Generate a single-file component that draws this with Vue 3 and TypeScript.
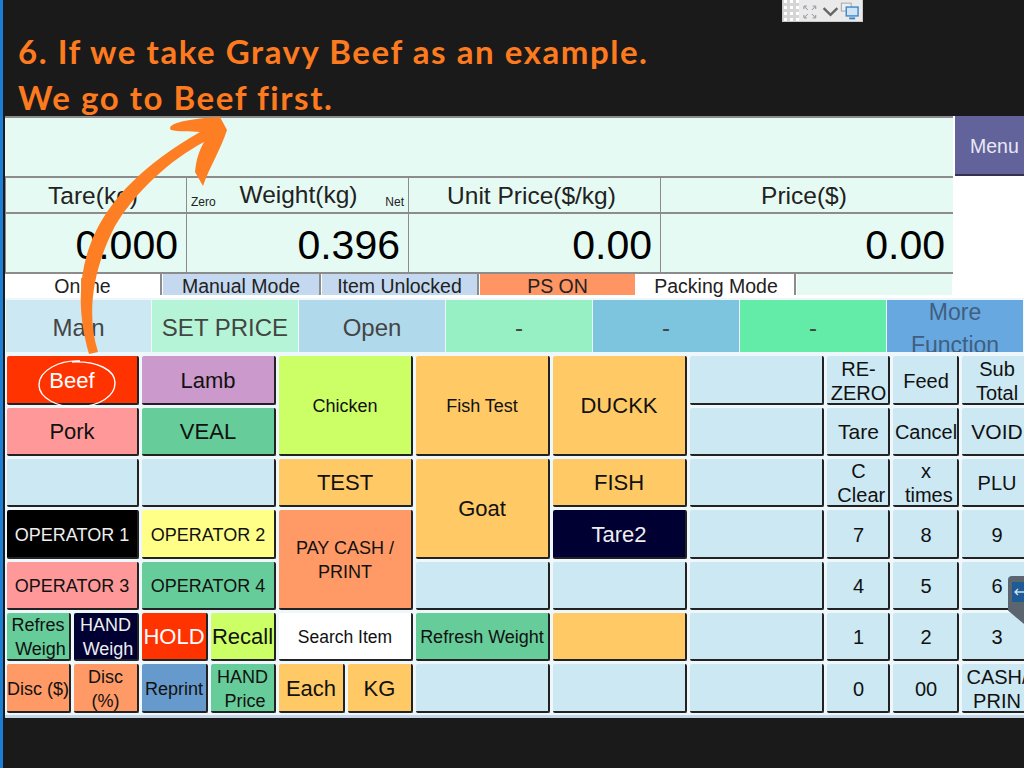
<template>
  <div class="page">
    <div class="headline">
      <div>6. If we take Gravy Beef as an example.</div>
      <div>We go to Beef first.</div>
    </div>

    <div class="screen">
      <div class="top">
        <div class="display">
          <div class="message"></div>
          <div class="readings heads">
            <div class="cell">Tare(kg)</div>
            <div class="cell weight-head">
              <small>Zero</small>
              <span>Weight(kg)</span>
              <small>Net</small>
            </div>
            <div class="cell">Unit Price($/kg)</div>
            <div class="cell">Price($)</div>
          </div>
          <div class="readings values">
            <div class="cell">0.000</div>
            <div class="cell">0.396</div>
            <div class="cell">0.00</div>
            <div class="cell">0.00</div>
          </div>
          <div class="status">
            <div
                v-for="s in statuses"
                :key="s.label + s.tone"
                class="status-item"
                :class="s.tone"
            >
              {{ s.label }}
            </div>
          </div>
        </div>
        <div class="side">
          <div class="menu-btn">Menu</div>
        </div>
      </div>

      <div class="tabs">
        <div
            v-for="(t, i) in tabs"
            :key="i"
            class="tab"
            :class="t.tone"
        >
          <span class="tab-label">{{ t.label }}</span>
        </div>
      </div>

      <div class="keys">
        <div
            v-for="(k, i) in keys"
            :key="i"
            class="key"
            :class="k.tone"
            :style="{ gridColumn: k.col, gridRow: k.row, fontSize: k.size + 'px' }"
        >
          {{ k.label }}
        </div>
      </div>
    </div>

    <!-- 橙色箭头 -->
    <svg class="overlay" width="1024" height="768" viewBox="0 0 1024 768">
      <path
          d="M89 354C77 312 77 270 96 231C112 199 142 165 200 132C190 131 178 132 171 130C167 126 176 122 190 120C202 118 212 117 220 117L227 130C221 149 209 168 203 186L195 172C196 160 199 151 204 142C170 160 135 192 115 226C95 265 85 310 98 352Z"
          fill="#fe7f23"
      />
      <path
          d="M80 361C60 360 39 370 39 385C39 398 58 408 78 407C100 406 115 396 115 383C115 370 98 361 72 362"
          fill="none"
          stroke="#fff"
          stroke-width="1.4"
      />
    </svg>

    <!-- 远程工具条 -->
    <div class="remote-bar">
      <div class="grip">
        <i v-for="n in 12" :key="n"></i>
      </div>
      <svg width="64" height="22" viewBox="0 0 64 22">
        <path
            d="M5 9V6h3M14 6h3v3M5 15v3h3M14 18h3v-3M6 7l3 3M16 7l-3 3M6 17l3-3M16 17l-3-3"
            fill="none"
            stroke="#8a8f94"
            stroke-width="1"
        />
        <path d="M25 8l7 7 7-7" fill="none" stroke="#666" stroke-width="2.4"/>
        <rect x="43" y="3" width="10" height="8" fill="#eee" stroke="#a5a5a5"/>
        <rect x="48" y="7" width="12" height="9" fill="#cfe4f7" stroke="#3d85c6" stroke-width="1.4"/>
        <path d="M51 18.5h6" stroke="#3d85c6" stroke-width="2"/>
      </svg>
    </div>

    <div class="side-handle">
      <svg width="12" height="20" viewBox="0 0 12 20">
        <rect width="12" height="20" fill="#1c5b95"/>
        <path d="M12 10H3M6 7l-3 3 3 3" fill="none" stroke="#cfe0ee" stroke-width="1.4"/>
      </svg>
    </div>
  </div>
</template>

<script setup lang="ts">
interface Key {
  label: string
  tone: string
  col: string
  row: string
  size: number
}

const statuses = [
  { label: 'Online', tone: 'white' },
  { label: 'Manual Mode', tone: 'pale' },
  { label: 'Item Unlocked', tone: 'pale' },
  { label: 'PS ON', tone: 'coral' },
  { label: 'Packing Mode', tone: 'white' },
  { label: '', tone: 'mint' }
]

const tabs = [
  { label: 'Main', tone: 'tab-a' },
  { label: 'SET PRICE', tone: 'tab-b' },
  { label: 'Open', tone: 'tab-c' },
  { label: '-', tone: 'tab-d' },
  { label: '-', tone: 'tab-e' },
  { label: '-', tone: 'tab-f' },
  { label: 'More\nFunction', tone: 'tab-g' }
]

const k = (label: string, tone: string, col: string, row: string, size = 22): Key => ({ label, tone, col, row, size })

const keys: Key[] = [
  k('Beef', 'red', '1 / 3', '1'),
  k('Lamb', 'purple', '3 / 5', '1'),
  k('Chicken', 'lime', '5 / 7', '1 / 3', 18),
  k('Fish Test', 'orange', '7', '1 / 3', 18),
  k('DUCKK', 'orange', '8', '1 / 3'),
  k('', 'blank', '9', '1'),
  k('RE-\nZERO', 'blank', '10', '1', 20),
  k('Feed', 'blank', '11', '1', 20),
  k('Sub\nTotal', 'blank', '12', '1', 20),

  k('Pork', 'pink', '1 / 3', '2'),
  k('VEAL', 'green', '3 / 5', '2'),
  k('', 'blank', '9', '2'),
  k('Tare', 'blank', '10', '2', 21),
  k('Cancel', 'blank', '11', '2', 20),
  k('VOID', 'blank', '12', '2', 21),

  k('', 'blank', '1 / 3', '3'),
  k('', 'blank', '3 / 5', '3'),
  k('TEST', 'orange', '5 / 7', '3'),
  k('Goat', 'orange', '7', '3 / 5'),
  k('FISH', 'orange', '8', '3'),
  k('', 'blank', '9', '3'),
  k('C\n\u00a0Clear', 'blank', '10', '3', 20),
  k('x\n\u00a0times', 'blank', '11', '3', 20),
  k('PLU', 'blank', '12', '3', 20),

  k('OPERATOR 1', 'black', '1 / 3', '4', 18),
  k('OPERATOR 2', 'yellow', '3 / 5', '4', 18),
  k('PAY CASH /\nPRINT', 'coral', '5 / 7', '4 / 6', 18),
  k('Tare2', 'navy', '8', '4'),
  k('', 'blank', '9', '4'),
  k('7', 'blank', '10', '4', 20),
  k('8', 'blank', '11', '4', 20),
  k('9', 'blank', '12', '4', 20),

  k('OPERATOR 3', 'pink', '1 / 3', '5', 18),
  k('OPERATOR 4', 'green', '3 / 5', '5', 18),
  k('', 'blank', '7', '5'),
  k('', 'blank', '8', '5'),
  k('', 'blank', '9', '5'),
  k('4', 'blank', '10', '5', 20),
  k('5', 'blank', '11', '5', 20),
  k('6', 'blank', '12', '5', 20),

  k('Refres\n\u00a0Weigh', 'green', '1', '6', 18),
  k('HAND\n\u00a0Weigh', 'navy', '2', '6', 18),
  k('HOLD', 'red', '3', '6'),
  k('Recall', 'lime', '4', '6'),
  k('Search Item', 'white', '5 / 7', '6', 17.5),
  k('Refresh Weight', 'green', '7', '6', 18),
  k('', 'orange', '8', '6'),
  k('', 'blank', '9', '6'),
  k('1', 'blank', '10', '6', 20),
  k('2', 'blank', '11', '6', 20),
  k('3', 'blank', '12', '6', 20),

  k('Disc ($)', 'coral', '1', '7', 18),
  k('Disc\n(%)', 'coral', '2', '7', 18),
  k('Reprint', 'blue', '3', '7', 18),
  k('HAND\n\u00a0Price', 'green', '4', '7', 18),
  k('Each', 'orange', '5', '7'),
  k('KG', 'orange', '6', '7'),
  k('', 'blank', '7', '7'),
  k('', 'blank', '8', '7'),
  k('', 'blank', '9', '7'),
  k('0', 'blank', '10', '7', 20),
  k('00', 'blank', '11', '7', 20),
  k('CASH/\nPRIN', 'blank', '12', '7', 20)
]
</script>

<style scoped>
.page {
  position: relative;
  width: 1024px;
  height: 768px;
  overflow: hidden;
  background: #1a1a1a;
  border-left: 3px solid #1c7fd6;
  box-sizing: border-box;
  font-family: "Liberation Sans", Arial, sans-serif;
  color: #111;
}

.headline {
  height: 116px;
  box-sizing: border-box;
  padding: 28px 0 0 15px;
  font-family: Lato, sans-serif;
  font-weight: 700;
  font-size: 33px;
  line-height: 46px;
  letter-spacing: 1.55px;
  color: #fe7a1f;
}

.screen {
  margin-left: 2px;
  height: 602px;
  background: #edf7fc;
  border-bottom: 3px solid #c5d5e6;
  box-sizing: border-box;
}

.top {
  display: flex;
  height: 182px;
}

.display {
  width: 948px;
  background: #e5faf2;
}

.message {
  height: 60px;
  border-top: 2px solid #8c8c8c;
  box-sizing: border-box;
}

.readings {
  display: grid;
  grid-template-columns: 181px 222px 252px 293px;
}

.cell {
  border-top: 2px solid #8c8c8c;
  border-left: 1px solid #8c8c8c;
  box-sizing: border-box;
}

.heads {
  height: 36px;
}

.heads .cell {
  display: flex;
  align-items: center;
  justify-content: center;
  padding: 2px 6px 0 0;
  font-size: 24.5px;
  color: #222;
}

.heads .weight-head {
  justify-content: space-between;
  padding: 0 4px;
}

.weight-head small {
  align-self: flex-end;
  padding-bottom: 3px;
  font-size: 12px;
}

.weight-head span {
  margin-right: 4px;
}

.values {
  height: 60px;
}

.values .cell {
  padding-right: 8px;
  font-size: 41px;
  line-height: 62px;
  text-align: right;
  color: #000;
}

.status {
  display: grid;
  grid-template-columns: 158px 159px 158px 158px 159px 156px;
  height: 26px;
  border-top: 2px solid #8c8c8c;
  box-sizing: border-box;
  background: #fff;
}

.status-item {
  height: 21px;
  line-height: 24px;
  text-align: center;
  font-size: 19.5px;
  color: #222;
  border-right: 2px solid #8c8c8c;
  margin-right: 1px;
}

.status-item.white { background: #fff; }
.status-item.pale { background: #c4d9f0; }
.status-item.coral { background: #ff9562; border-right-color: #fff; }
.status-item.mint { background: #e5faf2; border-right: 0; }

.side {
  flex: 1;
  background: #fff;
  padding-left: 2px;
}

.menu-btn {
  height: 60px;
  box-sizing: border-box;
  padding-left: 15px;
  line-height: 60px;
  font-size: 19.5px;
  color: #e9e9f5;
  background: #63639b;
  border-bottom: 2px solid #33334f;
}

.tabs {
  display: grid;
  grid-template-columns: 146px 147px 147px 147px 147px 147px 136px;
  height: 58px;
  padding: 2px 0 0 1px;
  box-sizing: border-box;
}

.tab {
  height: 52px;
  overflow: hidden;
  margin-right: 1px;
  text-align: center;
  font-size: 24px;
  color: #444;
  line-height: 56px;
}

.tab-label {
  display: block;
  white-space: pre-line;
}

.tab-a { background: #cce8f3; }
.tab-b { background: #b5f4d6; }
.tab-c { background: #b0d9eb; }
.tab-d { background: #96f0c4; }
.tab-e { background: #7dc4df; }
.tab-f { background: #63eba8; }
.tab-g {
  background: #68a8e0;
  font-size: 23px;
  line-height: 33px;
  margin-right: 0;
  color: #3f5f80;
}

.tab-g .tab-label {
  margin-top: -4px;
}

.keys {
  display: grid;
  grid-template-columns: 64px 65px 66px 65px 66px 65px 134px 134px 134px 63px 66px 70px;
  grid-template-rows: 49px 48px 48px 49px 48px 48px 49px;
  gap: 3px;
  padding-left: 2px;
}

.key {
  display: flex;
  align-items: center;
  justify-content: center;
  overflow: hidden;
  box-sizing: border-box;
  padding-top: 2px;
  white-space: pre-line;
  text-align: center;
  line-height: 24px;
  border-right: 2px solid #222;
  border-bottom: 2px solid #222;
  border-radius: 2px;
  color: #111;
}

.blank {
  padding-left: 2px;
  background: #cce8f3;
}
.red { background: #ff3300; color: #fff; }
.purple { background: #cc99cc; }
.lime { background: #ccff66; }
.orange { background: #ffc966; }
.pink { background: #ff9999; }
.green { background: #66cc99; }
.black { background: #000; color: #eee; }
.yellow { background: #ffff88; }
.coral { background: #ff9966; }
.navy { background: #000033; color: #eee; }
.blue { background: #6699cc; }
.white { background: #fff; }

.overlay {
  position: absolute;
  left: -3px;
  top: 0;
  pointer-events: none;
}

.remote-bar {
  position: absolute;
  left: 779px;
  top: 0;
  display: flex;
  width: 81px;
  height: 22px;
  background: #eaeaea;
  border: 1px solid #c9c9c9;
  border-top: 0;
  box-sizing: border-box;
}

.grip {
  display: grid;
  grid-template-columns: repeat(3, 3px);
  gap: 3px;
  align-content: center;
  width: 16px;
  padding-left: 1px;
  background: #d5d5d5;
  box-sizing: border-box;
}

.grip i {
  width: 3px;
  height: 3px;
  background: #fff;
}

.side-handle {
  position: absolute;
  left: 1005px;
  top: 576px;
  width: 16px;
  height: 48px;
  padding: 6px 0 0 4px;
  box-sizing: border-box;
  background: #5a6570;
  border-radius: 4px 0 0 0;
  clip-path: polygon(0 0, 100% 0, 100% 100%, 0 72%);
}
</style>

<style>
html,
body {
  margin: 0;
  background: #1a1a1a;
}
</style>
